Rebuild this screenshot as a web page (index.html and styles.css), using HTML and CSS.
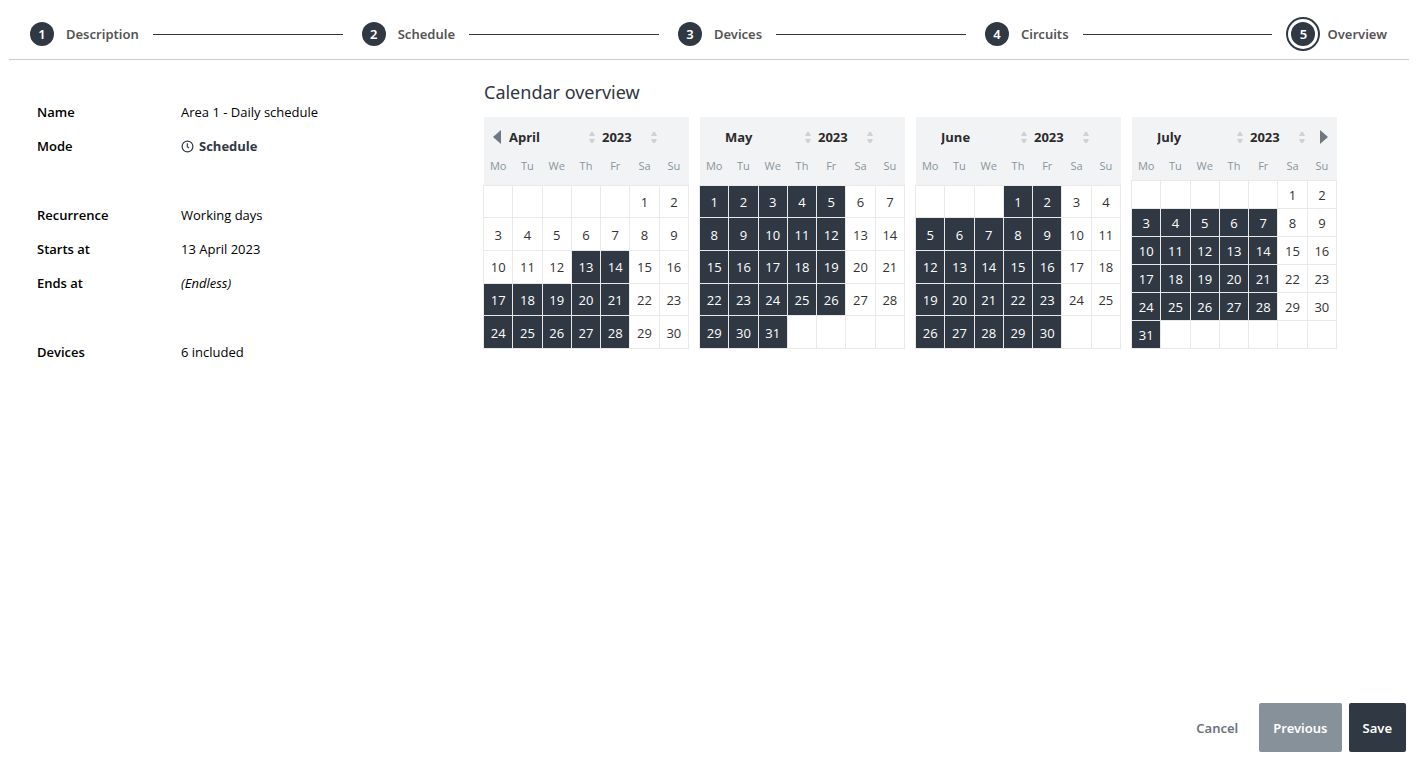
FILE: index.html
```html
<!DOCTYPE html>
<html lang="en">
<head>
<meta charset="utf-8">
<title>Schedule wizard</title>
<link rel="stylesheet" href="styles.css">
</head>
<body>
<div class="wizard">
  <ol class="steps">
    <li class="step"><span class="badge">1</span><span class="step-name">Description</span></li>
    <li class="step"><span class="badge">2</span><span class="step-name">Schedule</span></li>
    <li class="step"><span class="badge">3</span><span class="step-name">Devices</span></li>
    <li class="step"><span class="badge">4</span><span class="step-name">Circuits</span></li>
    <li class="step" aria-current="step"><span class="badge badge-current">5</span><span class="step-name">Overview</span></li>
  </ol>

  <main class="overview">
    <div class="summary">
      <dl class="facts">
        <dt>Name</dt><dd>Area 1 - Daily schedule</dd>
        <dt>Mode</dt>
        <dd class="mode">
          <svg class="clock" viewBox="0 0 13 13" aria-hidden="true"><circle cx="6.5" cy="6.5" r="5.4"/><path d="M6.3 3.2V6.8L8 8.1"/></svg>
          Schedule
        </dd>
      </dl>
      <dl class="facts">
        <dt>Recurrence</dt><dd>Working days</dd>
        <dt>Starts at</dt><dd>13 April 2023</dd>
        <dt>Ends at</dt><dd><em>(Endless)</em></dd>
      </dl>
      <dl class="facts">
        <dt>Devices</dt><dd>6 included</dd>
      </dl>
    </div>
    <section class="calendar">
      <h1 class="title">Calendar overview</h1>
      <div class="months" id="months"></div>
    </section>
  </main>

  <footer class="actions">
    <button type="button" class="button button-plain">Cancel</button>
    <button type="button" class="button button-muted">Previous</button>
    <button type="button" class="button button-primary">Save</button>
  </footer>
</div>
<script src="script.js"></script>
</body>
</html>
```
FILE: styles.css
```css
* { box-sizing: border-box; }

body {
  margin: 0;
  background: #fff;
  color: #000;
  font-family: "Open Sans", "Noto Sans", sans-serif;
  font-size: 13px;
  line-height: 18px;
}

button, select {
  font: inherit;
  color: inherit;
  margin: 0;
  padding: 0;
  border: 0;
  background: none;
  appearance: none;
}

.wizard {
  display: flex;
  flex-direction: column;
  min-height: 100vh;
  padding: 9px;
}

.steps {
  display: flex;
  align-items: center;
  height: 51px;
  margin: 0;
  padding: 0 22px 0 21px;
  list-style: none;
  border-bottom: 1px solid #c8ced4;
}

.step {
  display: flex;
  align-items: center;
  gap: 12px;
  color: #555;
  font-family: "Noto Sans", sans-serif;
  font-weight: 600;
}

.step:not(:last-child) { flex: 1 1 190px; flex-basis: auto; }

.step:not(:last-child)::after {
  content: "";
  flex: 1;
  height: 1px;
  margin: 0 19px 0 2px;
  background: #303641;
}

.badge {
  display: grid;
  place-items: center;
  width: 24px;
  height: 24px;
  border-radius: 50%;
  background: #303844;
  color: #fff;
}

.badge-current { box-shadow: 0 0 0 3px #fff, 0 0 0 5px #303844; }

.overview {
  display: flex;
  align-items: flex-start;
}

.summary {
  flex: 0 0 474px;
  padding: 35px 0 0 28px;
}

.facts {
  display: grid;
  grid-template-columns: 144px 1fr;
  margin: 0 0 35px;
  line-height: 34px;
}

.facts dt { font-weight: 600; }
.facts dd { margin: 0; }

.facts .mode {
  display: flex;
  align-items: center;
  gap: 5px;
  color: #303844;
  font-weight: 700;
}

.clock {
  width: 13px;
  height: 13px;
  fill: none;
  stroke: #303844;
  stroke-width: 1.2;
}

.calendar {
  flex: 1;
  padding-top: 20px;
}

.title {
  margin: 0 0 13px;
  padding-left: 1px;
  color: #303641;
  font-family: "Noto Sans", sans-serif;
  font-size: 18px;
  font-weight: 400;
  line-height: 24px;
}

.months {
  display: grid;
  grid-template-columns: repeat(4, minmax(0, 206px));
  gap: 10px;
}

.month {
  display: flex;
  flex-direction: column;
  height: 232px;
}

.month-head {
  display: flex;
  align-items: center;
  height: 40px;
  margin-left: 1px;
  padding: 0 9px;
  background: #f1f3f5;
  color: #2b2b2b;
  font-weight: 700;
}

.nav {
  width: 8px;
  height: 14px;
  line-height: 0;
}

.nav svg { width: 8px; height: 14px; fill: #6f7780; }
.nav-prev { margin-right: 8px; }
.nav-next { margin-left: auto; }

.field {
  display: grid;
  grid-template-columns: 1fr 6px;
  align-items: center;
}

.field select { width: 100%; }
.field svg { width: 6px; height: 11px; fill: #cdd2d6; }
.field-month { width: 86px; margin-right: 7px; }
.field-year { width: 55px; }

.grid {
  flex: 1;
  width: 100%;
  border-collapse: collapse;
  table-layout: fixed;
  color: #333;
  text-align: center;
}

.grid th {
  height: 28px;
  padding: 0;
  background: #f1f3f5;
  color: #8a9499;
  font-size: 11px;
  font-weight: 400;
  line-height: 18px;
  vertical-align: top;
}

.grid-six th { height: 23px; }

.grid td {
  padding: 1px 0 0;
  border: 1px solid #e9e9e9;
}

.grid .on {
  background: #303844;
  color: #fff;
}

.actions {
  display: flex;
  justify-content: flex-end;
  gap: 7px;
  margin-top: auto;
  padding-right: 3px;
}

.button {
  height: 49px;
  padding: 0 14px;
  border-radius: 2px;
  font-family: "Noto Sans", sans-serif;
  font-weight: 600;
}

.button-plain { color: #6c757d; }
.button-muted { background: #87919a; color: #fff; }
.button-primary { background: #303844; color: #fff; }
```
FILE: script.js
```js
const NAMES = ["January", "February", "March", "April", "May", "June", "July",
  "August", "September", "October", "November", "December"];
const WEEKDAYS = ["Mo", "Tu", "We", "Th", "Fr", "Sa", "Su"];
const YEAR = 2023;
const START = new Date(YEAR, 3, 13);
const SHOWN = [3, 4, 5, 6];
const SORT = '<svg viewBox="0 0 6 11" aria-hidden="true"><path d="M0 4L2 0H4L6 4ZM0 7H6L4 11H2Z"/></svg>';

function weeks(month) {
  const offset = (new Date(YEAR, month, 1).getDay() + 6) % 7;
  const days = new Date(YEAR, month + 1, 0).getDate();
  const rows = [];
  for (let i = 0; i < offset + days; i += 7) {
    let row = "";
    for (let col = 0; col < 7; col++) {
      const day = i + col - offset + 1;
      const valid = day > 0 && day <= days;
      const on = valid && col < 5 && new Date(YEAR, month, day) >= START;
      row += `<td${on ? ' class="on"' : ""}>${valid ? day : ""}</td>`;
    }
    rows.push(`<tr>${row}</tr>`);
  }
  return rows;
}

function monthView(month, index) {
  const first = index === 0;
  const last = index === SHOWN.length - 1;
  const rows = weeks(month);
  const prev = first
    ? '<button type="button" class="nav nav-prev" aria-label="Previous month"><svg viewBox="0 0 8 14"><path d="M8 0V14L0 7Z"/></svg></button>'
    : '<span class="nav nav-prev"></span>';
  const next = last
    ? '<button type="button" class="nav nav-next" aria-label="Next month"><svg viewBox="0 0 8 14"><path d="M0 0V14L8 7Z"/></svg></button>'
    : "";
  const options = NAMES.map((n, i) => `<option${i === month ? " selected" : ""}>${n}</option>`).join("");
  return `<div class="month">
    <div class="month-head">${prev}
      <span class="field field-month"><select aria-label="Month">${options}</select>${SORT}</span>
      <span class="field field-year"><select aria-label="Year"><option>${YEAR}</option></select>${SORT}</span>
      ${next}</div>
    <table class="grid${rows.length > 5 ? " grid-six" : ""}"><thead><tr>${WEEKDAYS.map(d => `<th scope="col">${d}</th>`).join("")}</tr></thead>
    <tbody>${rows.join("")}</tbody></table>
  </div>`;
}

document.getElementById("months").innerHTML = SHOWN.map(monthView).join("");
```
